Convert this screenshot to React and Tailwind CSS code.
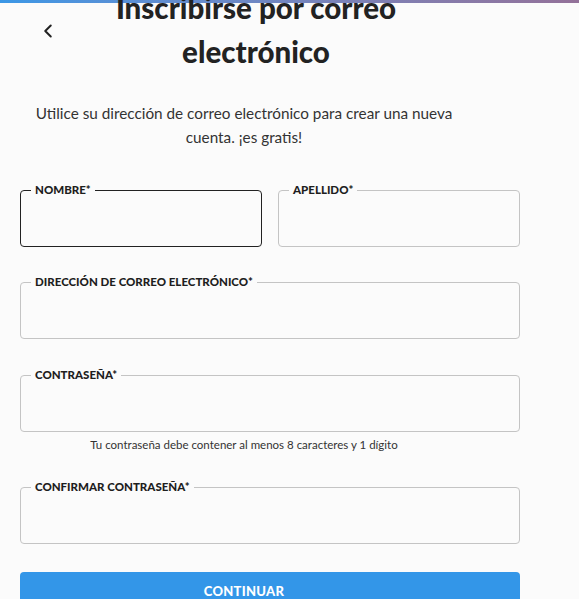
import React, { useState } from "react";
import { ChevronLeft } from "lucide-react";

const Field = ({ label, type = "text", focused, className = "" }) => (
  <fieldset
    className={`rounded-[4px] border px-[10px] ${
      focused ? "border-[#222]" : "border-[#c4c4c4]"
    } ${className}`}
  >
    <legend className="px-[4px] text-[11.5px] font-black uppercase leading-[16px] text-[#1e1e1e]">
      {label}
    </legend>
    <input type={type} className="block h-[48px] w-full bg-transparent outline-none" />
  </fieldset>
);

const App = () => {
  const [loading] = useState(false);

  return (
    <div className="min-h-[599px] w-full overflow-hidden bg-[#fbfbfb] font-['Lato',sans-serif] text-[#222]">
      <div className="h-[3px] w-full bg-gradient-to-r from-[#3a97e6] to-[#937199]" />

      <div className="px-[20px]">
        {/* Header */}
        <div className="mt-[-17px] flex items-start">
          <button className="mt-[34px] ml-[17px] text-[#222]">
            <ChevronLeft size={22} strokeWidth={2.2} />
          </button>
          <h1 className="ml-[17px] w-[360px] text-center text-[29.5px] font-black leading-[44px] text-[#222]">
            Inscribirse por correo electrónico
          </h1>
        </div>

        <p className="mt-[27px] w-[448px] text-center text-[15.3px] leading-[24px] text-[#333]">
          Utilice su dirección de correo electrónico para crear una nueva cuenta. ¡es gratis!
        </p>

        {/* Form */}
        <form className="mt-[33px] w-[500px]">
          <div className="flex gap-[16px]">
            <Field label="Nombre*" focused className="flex-1" />
            <Field label="Apellido*" className="flex-1" />
          </div>
          <Field label="Dirección de correo electrónico*" type="email" className="mt-[27px]" />
          <Field label="Contraseña*" type="password" className="mt-[28px]" />
          <p className="mt-[5px] w-[448px] text-center text-[11.5px] leading-[16px] text-[#333]">
            Tu contraseña debe contener al menos 8 caracteres y 1 dígito
          </p>
          <Field label="Confirmar contraseña*" type="password" className="mt-[26px]" />
          <button
            type="button"
            disabled={loading}
            className="mt-[28px] h-[40px] w-full rounded-[4px] bg-[#3396e8] text-[13px] font-black uppercase tracking-[0.3px] text-white"
          >
            <span className="mr-[52px]">Continuar</span>
          </button>
        </form>
      </div>
    </div>
  );
};

export default App;
